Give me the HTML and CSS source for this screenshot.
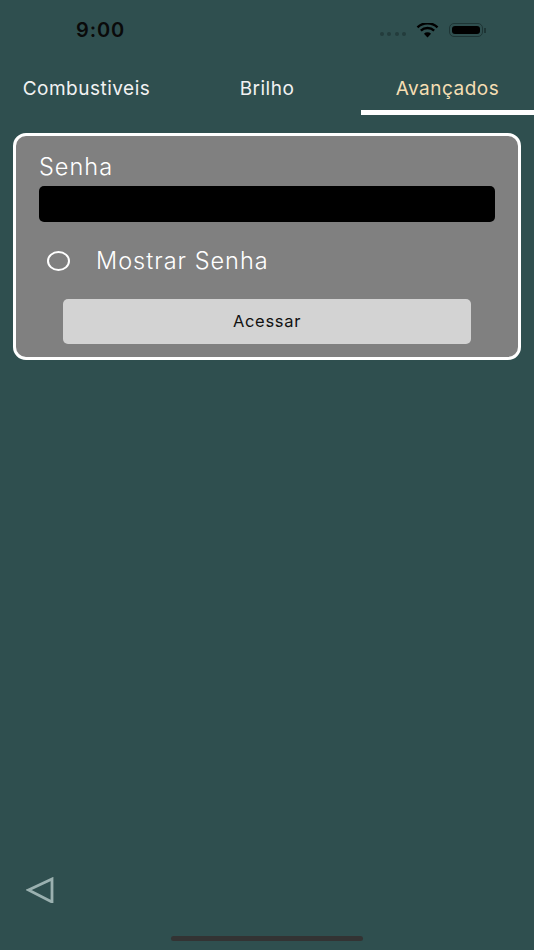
FILE: index.html
```html
<!DOCTYPE html>
<html lang="pt-BR">
<head>
  <meta charset="UTF-8" />
  <title>Avançados</title>
  <meta name="viewport" content="width=device-width, initial-scale=1.0" />
  <link rel="stylesheet" href="styles.css">
</head>
<body>
  <div class="status-bar">
    <span class="time">9:00</span>
    <div class="status-icons">
      <div class="signal"><i></i><i></i><i></i><i></i></div>
      <svg class="wifi" width="23" height="15" viewBox="0 0 24 16">
        <path d="M12 15.5 8.2 11.4a5.6 5.6 0 0 1 7.6 0Z" fill="#000" />
        <path d="M4.9 8.2a10.4 10.4 0 0 1 14.2 0" fill="none" stroke="#000" stroke-width="2.6" />
        <path d="M1.3 4.6a15.6 15.6 0 0 1 21.4 0" fill="none" stroke="#000" stroke-width="2.6" />
      </svg>
      <div class="battery"><div class="battery-fill"></div></div>
      <div class="battery-cap"></div>
    </div>
  </div>

  <nav class="tabs">
    <a class="tab">Combustiveis</a>
    <a class="tab">Brilho</a>
    <a class="tab active">Avançados</a>
  </nav>

  <div class="card">
    <label class="field-label">Senha</label>
    <input class="password" type="password" />
    <div class="show-row">
      <span class="radio"></span>
      <span class="show-label">Mostrar Senha</span>
    </div>
    <button class="submit" type="button">Acessar</button>
  </div>

  <div class="spacer"></div>

  <div class="back-row">
    <svg width="28" height="26" viewBox="0 0 28 26">
      <path d="M2.5 13 26 2v23Z" fill="none" stroke="#9bb1b0" stroke-width="2.8" />
    </svg>
  </div>
  <div class="home-bar"></div>
</body>
</html>
```

FILE: styles.css
```css
* {
  box-sizing: border-box;
  margin: 0;
  padding: 0;
  font-family: Inter, 'Liberation Sans', sans-serif;
}

body {
  display: flex;
  flex-direction: column;
  height: 950px;
  background: #2f4f4f;
  overflow: hidden;
}

.status-bar {
  display: flex;
  align-items: center;
  justify-content: space-between;
  height: 60px;
  padding: 0 48px 0 76px;
}

.time {
  font-size: 20px;
  font-weight: 600;
  color: #0a0a0a;
  letter-spacing: 0.9px;
}

.status-icons {
  display: flex;
  align-items: center;
}

.signal {
  display: flex;
  gap: 3.5px;
  margin: 8px 10px 0 0;
}

.signal i {
  width: 4px;
  height: 4px;
  border-radius: 50%;
  background: #233c3c;
}

.wifi {
  margin-right: 10px;
}

.battery {
  width: 34px;
  height: 14px;
  padding: 2px;
  border: 1px solid #1e3535;
  border-radius: 5px;
}

.battery-fill {
  height: 100%;
  background: #000;
  border-radius: 3px;
}

.battery-cap {
  width: 2px;
  height: 5px;
  margin-left: 1px;
  background: #1e3535;
}

.tabs {
  display: grid;
  grid-template-columns: 173px 1fr 173px;
  height: 55px;
}

.tab {
  display: flex;
  align-items: center;
  justify-content: center;
  height: 55px;
  padding-top: 2px;
  padding-bottom: 1px;
  font-size: 19px;
  font-weight: 400;
  letter-spacing: 0.5px;
  color: #f2f2f2;
}

.tab.active {
  color: #f5deb3;
  border-bottom: 5px solid #fff;
  padding-top: 6px;
  padding-bottom: 0;
}

.card {
  display: flex;
  flex-direction: column;
  margin: 18px 13px 0;
  height: 227px;
  padding: 16px 23px 0;
  background: #808080;
  border: 3px solid #fff;
  border-radius: 13px;
}

.field-label {
  height: 32px;
  font-size: 23.5px;
  font-weight: 350;
  line-height: 30px;
  letter-spacing: 1px;
  color: #fff;
}

.password {
  display: block;
  width: 100%;
  height: 36px;
  margin-top: 2px;
  background: #000;
  border: none;
  border-radius: 5px;
}

.show-row {
  display: flex;
  align-items: center;
  height: 77px;
  padding-left: 8px;
}

.radio {
  width: 23px;
  height: 20px;
  border: 2.8px solid #fff;
  border-radius: 50%;
}

.show-label {
  margin-left: 26px;
  font-size: 23.5px;
  font-weight: 350;
  letter-spacing: 1px;
  color: #fff;
}

.submit {
  align-self: center;
  width: 408px;
  height: 45px;
  padding-bottom: 2px;
  background: #d3d3d3;
  border: none;
  border-radius: 5px;
  font-size: 16.5px;
  letter-spacing: 0.7px;
  color: #111;
}

.spacer {
  flex: 1;
}

.back-row {
  display: flex;
  height: 26px;
  padding-left: 26px;
  margin-bottom: 33px;
}

.home-bar {
  align-self: center;
  width: 192px;
  height: 5px;
  margin-bottom: 9px;
  background: #333;
  border-radius: 3px;
}
```
